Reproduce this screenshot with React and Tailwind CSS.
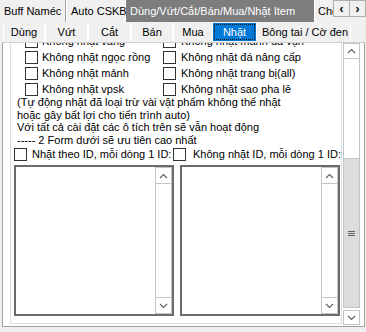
import React from 'react'

const Chevron = ({ dir = 'up' }) => (
  <svg width="9" height="6" viewBox="0 0 9 6">
    <polyline
      points={dir === 'up' ? '1,5 4.5,1.5 8,5' : '1,1 4.5,4.5 8,1'}
      fill="none"
      stroke="#606060"
      strokeWidth="1.2"
    />
  </svg>
)

function Check({ label, gap = 'gap-[4px]' }) {
  return (
    <div className={`flex items-center ${gap}`}>
      <span className="w-[13px] h-[13px] border border-[#333333] bg-white shrink-0" />
      <span className="whitespace-nowrap leading-[14px]">{label}</span>
    </div>
  )
}

function ListBox() {
  return (
    <div className="w-[160px] h-[151px] border-2 border-[#6b6b6b] bg-white flex justify-end">
      <div className="w-[17px] h-full flex flex-col border border-[#c4c4c4]">
        <div className="h-[16px] border-b border-[#c4c4c4] flex items-center justify-center">
          <Chevron dir="up" />
        </div>
        <div className="flex-1" />
        <div className="h-[16px] border-t border-[#c4c4c4] flex items-center justify-center">
          <Chevron dir="down" />
        </div>
      </div>
    </div>
  )
}

const ROWS = [
  ['Không nhặt vàng', 'Không nhặt mảnh đá vụn'],
  ['Không nhặt ngọc rồng', 'Không nhặt đá nâng cấp'],
  ['Không nhặt mảnh', 'Không nhặt trang bị(all)'],
  ['Không nhặt vpsk', 'Không nhặt sao pha lê'],
]

const SUB_TABS = [
  { name: 'Dùng', w: 'w-[42px]' },
  { name: 'Vứt', w: 'w-[43px]' },
  { name: 'Cắt', w: 'w-[43px]' },
  { name: 'Bán', w: 'w-[42px]' },
  { name: 'Mua', w: 'w-[40px]' },
]

export default function App() {
  return (
    <div className="w-[366px] h-[332px] bg-[#f0f0f0] overflow-hidden text-[11px] text-black font-['Liberation_Sans',Arial,sans-serif]">
      {/* Main tabs */}
      <div className="flex h-[22px] leading-[14px]">
        <div className="w-[66px] pl-[4px] flex items-center border-r border-[#a0a0a0] whitespace-nowrap">Buff Naméc</div>
        <div className="w-[60px] pl-[4px] flex items-center border-l border-white border-r border-[#a0a0a0] whitespace-nowrap">Auto CSKB</div>
        <div className="w-[188px] pl-[4px] flex items-center bg-[#7d7d7d] text-white whitespace-nowrap">Dùng/Vứt/Cắt/Bán/Mua/Nhặt Item</div>
        <div className="w-[19px] pl-[3px] flex items-center border-l border-white overflow-hidden whitespace-nowrap">Cho</div>
        <div className="flex h-[17px]">
          <div className="w-[17px] border border-[#adadad] bg-[#f0f0f0] flex items-center justify-center font-bold text-[12px] leading-none">‹</div>
          <div className="w-[16px] border border-l-0 border-[#adadad] bg-[#f0f0f0] flex items-center justify-center font-bold text-[12px] leading-none">›</div>
        </div>
      </div>

      {/* Sub tabs */}
      <div className="flex h-[20px] pl-[3px] pt-[1px] leading-[14px]">
        {SUB_TABS.map((t) => (
          <div key={t.name} className={`${t.w} h-[18px] flex items-center justify-center border-l border-white border-r border-[#6d6d6d]`}>
            {t.name}
          </div>
        ))}
        <div className="w-[43px] h-[18px] bg-[#0078d7] text-white p-[1px]">
          <div className="h-full flex items-center justify-center border border-dotted border-[#1a1a1a]">Nhặt</div>
        </div>
        <div className="w-[95px] h-[18px] pl-[5px] flex items-center border-l border-white border-r border-[#6d6d6d] whitespace-nowrap">
          Bông tai / Cờ đen
        </div>
      </div>

      {/* Page */}
      <div className="ml-[2px] w-[363px] h-[285px] bg-white border border-[#a0a0a0] border-t-[#d0d0d0] flex">
        <div className="w-[340px] h-[283px] overflow-hidden">
          <div className="ml-[7px] w-[332px] -mt-[10px] border-l border-r border-b border-[#d5dfe8] pb-[7px]">
            <div className="pl-[14px]">
              {ROWS.map(([a, b]) => (
                <div key={a} className="h-[16px] flex items-center">
                  <div className="w-[138px]"><Check label={a} /></div>
                  <Check label={b} gap="gap-[5px]" />
                </div>
              ))}
            </div>
            <div className="pl-[6px] -mt-[1px] leading-[12.5px] whitespace-nowrap">
              <div>(Tự động nhặt đã loại trừ vài vật phẩm không thể nhặt</div>
              <div>hoặc gây bất lợi cho tiến trình auto)</div>
              <div>Với tất cả cài đặt các ô tích trên sẽ vẫn hoạt động</div>
              <div>----- 2 Form dưới sẽ ưu tiên cao nhất</div>
            </div>
            <div className="mt-[1px] h-[14px] flex items-center pl-[3px]">
              <div className="w-[167px]"><Check label="Nhặt theo ID, mỗi dòng 1 ID:" gap="gap-[5px]" /></div>
              <Check label="Không nhặt ID, mỗi dòng 1 ID:" gap="gap-[7px]" />
            </div>
            <div className="mt-[4px] flex gap-[6px] pl-[3px]">
              <ListBox />
              <ListBox />
            </div>
          </div>
        </div>

        {/* Page scrollbar */}
        <div className="w-[17px] h-[282px] flex flex-col">
          <div className="h-[16px] border border-[#c4c4c4] flex items-center justify-center">
            <Chevron dir="up" />
          </div>
          <div className="h-[99px] border-x border-[#c4c4c4]" />
          <div className="h-[150px] bg-[#dcdcdc] border border-[#c4c4c4] flex items-center justify-center">
            <div className="w-[7px] flex flex-col gap-[1px]">
              <div className="h-[1px] bg-[#606060]" />
              <div className="h-[1px] bg-[#606060]" />
              <div className="h-[1px] bg-[#606060]" />
            </div>
          </div>
          <div className="h-[2px]" />
          <div className="h-[15px] border border-[#c4c4c4] flex items-center justify-center">
            <Chevron dir="down" />
          </div>
        </div>
      </div>
    </div>
  )
}
